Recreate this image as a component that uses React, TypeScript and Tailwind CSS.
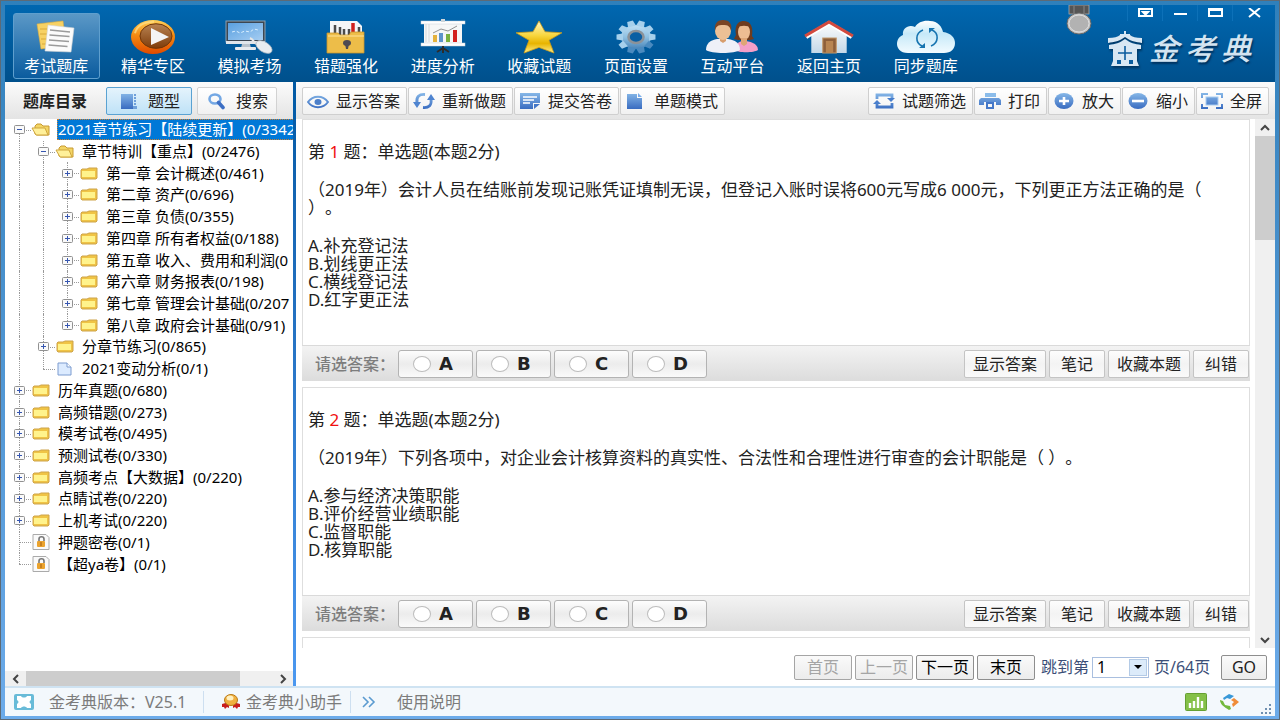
import { useState } from 'react';
import type { ReactNode } from 'react';
import clsx from 'clsx';

/* ---------- header icons ---------- */

const NotesIcon = () => (
    <svg width="40" height="34" viewBox="0 0 40 34">
        <path d="M1 4 L27 1 L30 25 L5 29 Z" fill="#f7d163" stroke="#e0b040" strokeWidth=".6" />
        <path d="M4 9h7M4 14h7M5 19h6M6 24h5" stroke="#d9a93a" />
        <path d="M12 5 L38 8 L35 32 L9 31 Z" fill="#fbfbfb" stroke="#d5d5d5" strokeWidth=".6" />
        <path d="M14 10l20 2M13.500 15l20 1.500M13 20l20 1.500M12.500 25l19 1.500" stroke="#9b9b9b" strokeWidth="1.300" />
    </svg>
);

const PlayIcon = () => (
    <svg width="46" height="36" viewBox="0 0 46 38" preserveAspectRatio="none">
        <defs>
            <linearGradient id="pl1" x1="0" y1="0" x2="0" y2="1">
                <stop offset="0" stopColor="#ffd05a" />
                <stop offset=".45" stopColor="#f58a10" />
                <stop offset="1" stopColor="#e04a00" />
            </linearGradient>
            <linearGradient id="pl2" x1="0" y1="0" x2="0" y2="1">
                <stop offset="0" stopColor="#b98352" />
                <stop offset="1" stopColor="#7e3c0a" />
            </linearGradient>
        </defs>
        <ellipse cx="23" cy="19" rx="22" ry="18" fill="url(#pl1)" />
        <ellipse cx="26" cy="18" rx="16" ry="13" fill="url(#pl2)" stroke="#6e3408" />
        <path d="M5 15C7 7 14 3 24 3" stroke="#ffe08a" strokeWidth="2" fill="none" opacity=".7" />
        <path d="M21 9.500v18L39 19Z" fill="#f4f4f4" />
    </svg>
);

const MonitorIcon = () => (
    <svg width="48" height="36" viewBox="0 0 48 36">
        <defs>
            <linearGradient id="mo1" x1="0" y1="0" x2="1" y2="1">
                <stop offset="0" stopColor="#5aa0e0" />
                <stop offset="1" stopColor="#a5cdf2" />
            </linearGradient>
        </defs>
        <rect x="1" y="2" width="39" height="21" fill="#3b4652" stroke="#8ea0b0" />
        <rect x="3" y="4" width="35" height="17" fill="url(#mo1)" />
        <path d="M7 13l4-1 4 2 5-2 5 1 4-3 4 1" stroke="#d9efff" fill="none" strokeDasharray="3 2" />
        <rect x="1" y="22" width="39" height="3" fill="#dfe5ea" />
        <path d="M17 25h8l1 4h-10Z" fill="#b8c2cb" />
        <rect x="10" y="28" width="21" height="3" rx="1" fill="#e6eaee" />
        <path d="M25 19c3 1 4 4 6 6" stroke="#e6e6e6" strokeWidth="2" fill="none" />
        <ellipse cx="39" cy="28" rx="9" ry="5" transform="rotate(32 39 28)" fill="#e9edf0" stroke="#a8b4bf" strokeWidth=".7" />
    </svg>
);

const LockFolderIcon = () => (
    <svg width="40" height="34" viewBox="0 0 40 34">
        <path d="M4 1h27l5 5v12H4Z" fill="#f5f6f7" />
        <path d="M9 5v10M14 7v8M18 9v6M23 9v6M33 7v7" stroke="#4b4b4b" strokeWidth="2.500" />
        <path d="M27 3v9" stroke="#d0201c" strokeWidth="3.500" />
        <path d="M1 13h11l2 2h9l2-3h13v21H1Z" fill="#edbd49" stroke="#c9952c" strokeWidth=".8" />
        <path d="M2 16h36" stroke="#ffe39a" />
        <ellipse cx="21" cy="23" rx="4" ry="3" fill="#4e4a52" />
        <path d="M19 24h4l-1 5h-2Z" fill="#4e4a52" />
    </svg>
);

const ChartIcon = () => (
    <svg width="46" height="36" viewBox="0 0 46 36">
        <rect x="4" y="4" width="38" height="21" fill="#f6f7f7" />
        <rect x="1" y="2" width="44" height="3" fill="#fff" stroke="#c9d3da" strokeWidth=".5" />
        <rect x="1" y="24" width="44" height="3" fill="#fff" stroke="#c9d3da" strokeWidth=".5" />
        <rect x="21" y="0" width="4" height="3" fill="#cfd6db" />
        <rect x="13" y="16" width="4" height="7" fill="#e4b23d" />
        <rect x="19" y="14" width="4" height="9" fill="#5d94cb" />
        <rect x="26" y="15" width="4" height="8" fill="#7ab13f" />
        <rect x="33" y="11" width="4" height="12" fill="#d3211f" />
        <path d="M13 14l8-4 7 2 9-5" stroke="#777" fill="none" strokeWidth=".8" />
        <path d="M6 5v18M9 5v18" stroke="#d5d9dc" />
        <path d="M23 27v7M23 29l-6 4M23 29l6 4" stroke="#2c2c2c" strokeWidth="2" />
    </svg>
);

const StarIcon = () => (
    <svg width="48" height="34" viewBox="0 0 48 36" preserveAspectRatio="none">
        <defs>
            <linearGradient id="st1" x1="0" y1="0" x2="0" y2="1">
                <stop offset="0" stopColor="#fff7c8" />
                <stop offset=".45" stopColor="#f8d63e" />
                <stop offset=".7" stopColor="#e8b400" />
                <stop offset="1" stopColor="#ffef8a" />
            </linearGradient>
        </defs>
        <path d="M24 1l6 11.500 17 1L34 21.500 39 35 24 29 9 35l5-13.500L1 13.500l17-1Z" fill="url(#st1)" stroke="#c99b1a" strokeWidth=".8" strokeLinejoin="round" />
    </svg>
);

const GearIcon = () => (
    <svg width="40" height="34" viewBox="0 0 40 34">
        <defs>
            <linearGradient id="ge1" x1="0" y1="0" x2="0" y2="34" gradientUnits="userSpaceOnUse">
                <stop offset="0" stopColor="#d3ecfb" />
                <stop offset=".5" stopColor="#8fc0e2" />
                <stop offset="1" stopColor="#2b6ba6" />
            </linearGradient>
        </defs>
        <ellipse cx="20" cy="17" rx="15" ry="12" fill="url(#ge1)" />
        {/* ten teeth, squashed like the wheel */}
        <g transform="translate(20 17) scale(1.180 1)" fill="url(#ge1)">
            {[0, 36, 72, 108, 144, 180, 216, 252, 288, 324].map((a) => (
                <path key={a} transform={`rotate(${a + 18})`} d="M-3.500 -11L-2.500 -16.500H2.500L3.500 -11Z" fill={a > 90 && a < 216 ? '#4a8abf' : '#a6d0ec'} />
            ))}
        </g>
        <ellipse cx="20" cy="17" rx="7.500" ry="6" fill="#0a5fa3" stroke="#8b9299" strokeWidth="2.600" />
    </svg>
);

const PeopleIcon = () => (
    <svg width="54" height="34" viewBox="0 0 54 34">
        <path d="M30 30c0-6 4-9 9-9s14 2 14 9c-4 3-20 3-23 0Z" fill="#f39fc8" />
        <path d="M31 15C29 3 35 1 39 1s10 3 8 15l2 3-4 1H33l-4-1Z" fill="#6f3c1e" />
        <ellipse cx="39" cy="12" rx="6" ry="8" fill="#edbd92" />
        <path d="M32 8c3-3 11-3 14 0l-2-5-5-1-5 1Z" fill="#6f3c1e" />
        <path d="M36 18h6v6l-3 2-3-2Z" fill="#dfa676" />
        <path d="M1 30c0-7 5-10 11-11h11c7 1 12 4 12 11-5 4-29 4-34 0Z" fill="#eef0f8" />
        <path d="M15 16h6v5l-3 2-3-2Z" fill="#d79d6d" />
        <ellipse cx="18" cy="11" rx="8" ry="9" fill="#ecc095" />
        <path d="M10 11C9 3 13 0 18 0s10 3 8 11c-1-5-3-6-8-6s-7 1-8 6Z" fill="#7b4524" />
    </svg>
);

const HomeIcon = () => (
    <svg width="50" height="34" viewBox="0 0 48 34" preserveAspectRatio="none">
        <defs>
            <linearGradient id="ho1" x1="0" y1="0" x2="0" y2="1">
                <stop offset="0" stopColor="#fdfdfd" />
                <stop offset="1" stopColor="#c4d8e8" />
            </linearGradient>
        </defs>
        <path d="M7 14L24 3l17 11v19H7Z" fill="url(#ho1)" />
        <rect x="18" y="18" width="13" height="15" fill="#8d5f3b" stroke="#c49a6c" />
        <rect x="21" y="21" width="7" height="12" fill="#b88552" />
        <path d="M2 17L24 3l22 14" fill="none" stroke="#fff" strokeWidth="4" />
        <path d="M1 16L24 2l23 14" fill="none" stroke="#d34a3e" strokeWidth="3" />
    </svg>
);

const CloudIcon = () => (
    <svg width="60" height="34" viewBox="0 0 60 34">
        <defs>
            <linearGradient id="cl1" x1="0" y1="0" x2="0" y2="1">
                <stop offset="0" stopColor="#fff" />
                <stop offset=".4" stopColor="#c6e9f8" />
                <stop offset="1" stopColor="#f2fbff" />
            </linearGradient>
        </defs>
        <path d="M12 33C4 33 1 28 1 24c0-5 3-8 6-9C6 8 13 4 19 7c3-5 9-7 15-6 8 0 12 6 13 11 8 1 12 6 12 11 0 6-4 10-11 10Z" fill="url(#cl1)" />
        <path d="M27 10c-8 3-8 13-1 16M35 26c8-3 8-13 1-16" stroke="#1674b0" strokeWidth="1.600" fill="none" />
        <path d="M23 28h6v-5ZM39 8h-6v5Z" fill="#1674b0" />
    </svg>
);

const MedalIcon = () => (
    <svg width="26" height="30" viewBox="0 0 26 30">
        <rect x="3" y="0" width="20" height="9" fill="#555" stroke="#aaa" strokeWidth=".8" />
        <path d="M8 1v7M18 1v7" stroke="#888" />
        <ellipse cx="13" cy="18.500" rx="12" ry="10.500" fill="#c6c6c6" stroke="#666" />
        <ellipse cx="13" cy="18.500" rx="10" ry="8.500" fill="#b2b2b2" stroke="#dedede" />
    </svg>
);

const TowerLogo = () => (
    <svg width="36" height="38" viewBox="0 0 36 38" className="drop-shadow-[1px_2px_1px_rgba(0,30,60,0.6)]">
        <g fill="#d8e7f3">
            <path d="M17 1h2v3h4v2h-10V4h4Z" />
            <path d="M1 8c6 0 10-1 12-3h10c2 2 6 3 12 3v5c-6-1-12-2-17-6C13 11 7 12 1 13Z" />
            <path d="M2 15C8 14 13 13 18 9c5 4 10 5 16 6v4H2Z" />
            <path d="M6 19h24v12l2 5H4l2-5Z" />
        </g>
        <path d="M18 16v14M11 23h14" stroke="#0a5c9e" strokeWidth="1.600" />
        <rect x="10" y="30" width="4" height="4" fill="#0a5c9e" />
        <rect x="22" y="30" width="4" height="4" fill="#0a5c9e" />
    </svg>
);

/* ---------- toolbar icons, all drawn on a 22x18 box ---------- */

const ToolDefs = () => (
    <svg width="0" height="0" className="absolute">
        <defs>
            <linearGradient id="tb" x1="0" y1="0" x2="0" y2="18" gradientUnits="userSpaceOnUse">
                <stop offset="0" stopColor="#8bbcea" />
                <stop offset="1" stopColor="#3467be" />
            </linearGradient>
        </defs>
    </svg>
);

const Tool = ({ children }: { children: ReactNode }) => (
    <svg width="22" height="18" viewBox="0 0 22 18" className="shrink-0" fill="none">
        {children}
    </svg>
);

const tools = {
    book: (
        <Tool>
            <path d="M3 2h12v15H3Z" fill="url(#tb)" />
            <path d="M16 2h2v2h-2zM16 5h2v2h-2zM16 8h2v2h-2zM16 11h2v2h-2zM15 14h4v3h-4z" fill="#6fa0da" />
        </Tool>
    ),
    search: (
        <Tool>
            <ellipse cx="9" cy="7" rx="5.500" ry="4.500" stroke="#74a8e4" strokeWidth="2.600" />
            <path d="M12.500 10.500L17 15.500" stroke="#3d6fc4" strokeWidth="3.600" strokeLinecap="round" />
        </Tool>
    ),
    eye: (
        <Tool>
            <path d="M1 10C6 3 16 3 21 10 16 17 6 17 1 10Z" stroke="url(#tb)" strokeWidth="2" />
            <ellipse cx="11" cy="10" rx="3.500" ry="3" fill="#4c7fca" />
        </Tool>
    ),
    refresh: (
        <Tool>
            <path d="M12 2.500C6 2 3 5 4 11M10 15.500c6 .5 9-2.500 8-8.500" stroke="url(#tb)" strokeWidth="2.800" />
            <path d="M0 10h8L4 16ZM22 8h-8L18 2Z" fill="#4f84d0" />
        </Tool>
    ),
    submit: (
        <Tool>
            <path d="M1 1h20v10h-7v6H1Z" fill="url(#tb)" />
            <path d="M4 5h14M4 8h11M4 11h7" stroke="#fff" strokeWidth="1.300" />
            <path d="M15 17l6-5h-6Z" fill="#4377c8" />
        </Tool>
    ),
    page: (
        <Tool>
            <path d="M2 2h10v4h5v11H2Z" fill="url(#tb)" />
            <path d="M13 1l4 4h-4Z" fill="#7badea" />
        </Tool>
    ),
    filter: (
        <Tool>
            <path d="M4 7V3h15v3M4 12v3h15v-4" stroke="url(#tb)" strokeWidth="2.800" />
            <path d="M0 12l4-4 4 4ZM14 6h8l-4 4Z" fill="#4a7fcc" />
        </Tool>
    ),
    print: (
        <Tool>
            <path d="M6 1h11v4H6Z" fill="#8bbcea" />
            <path d="M2 6h18l2 2v5h-5v-3H5v3H0V8Z" fill="url(#tb)" />
            <path d="M8 11h6v5H8Z" stroke="#4377c8" strokeWidth="2" />
        </Tool>
    ),
    plus: (
        <Tool>
            <ellipse cx="11" cy="9" rx="9.500" ry="8" fill="url(#tb)" />
            <path d="M11 5v8M6 9h10" stroke="#fff" strokeWidth="2.600" />
        </Tool>
    ),
    minus: (
        <Tool>
            <ellipse cx="11" cy="9" rx="9.500" ry="8" fill="url(#tb)" />
            <path d="M5 9h12" stroke="#fff" strokeWidth="2.600" />
        </Tool>
    ),
    full: (
        <Tool>
            <path d="M1 6V2h6M15 2h6v4M21 12v4h-6M7 16H1v-4" stroke="url(#tb)" strokeWidth="2" />
            <rect x="5" y="5" width="12" height="8" fill="url(#tb)" stroke="#a9cdf2" />
        </Tool>
    ),
};

/* ---------- data ---------- */

const navItems = [
    { label: '考试题库', icon: <NotesIcon /> },
    { label: '精华专区', icon: <PlayIcon /> },
    { label: '模拟考场', icon: <MonitorIcon /> },
    { label: '错题强化', icon: <LockFolderIcon /> },
    { label: '进度分析', icon: <ChartIcon /> },
    { label: '收藏试题', icon: <StarIcon /> },
    { label: '页面设置', icon: <GearIcon /> },
    { label: '互动平台', icon: <PeopleIcon /> },
    { label: '返回主页', icon: <HomeIcon /> },
    { label: '同步题库', icon: <CloudIcon /> },
];

type TreeIcon = 'open' | 'folder' | 'page' | 'lock';

interface TreeRow {
    depth: number;
    text: string;
    icon: TreeIcon;
    box?: '+' | '-';
    first?: boolean;
    last?: boolean;
}

const rows: TreeRow[] = [
    { depth: 0, text: '2021章节练习【陆续更新】(0/3342', icon: 'open', box: '-', first: true },
    { depth: 1, text: '章节特训【重点】(0/2476)', icon: 'open', box: '-' },
    { depth: 2, text: '第一章 会计概述(0/461)', icon: 'folder', box: '+' },
    { depth: 2, text: '第二章 资产(0/696)', icon: 'folder', box: '+' },
    { depth: 2, text: '第三章 负债(0/355)', icon: 'folder', box: '+' },
    { depth: 2, text: '第四章 所有者权益(0/188)', icon: 'folder', box: '+' },
    { depth: 2, text: '第五章 收入、费用和利润(0', icon: 'folder', box: '+' },
    { depth: 2, text: '第六章 财务报表(0/198)', icon: 'folder', box: '+' },
    { depth: 2, text: '第七章 管理会计基础(0/207', icon: 'folder', box: '+' },
    { depth: 2, text: '第八章 政府会计基础(0/91)', icon: 'folder', box: '+', last: true },
    { depth: 1, text: '分章节练习(0/865)', icon: 'folder', box: '+' },
    { depth: 1, text: '2021变动分析(0/1)', icon: 'page', last: true },
    { depth: 0, text: '历年真题(0/680)', icon: 'folder', box: '+' },
    { depth: 0, text: '高频错题(0/273)', icon: 'folder', box: '+' },
    { depth: 0, text: '模考试卷(0/495)', icon: 'folder', box: '+' },
    { depth: 0, text: '预测试卷(0/330)', icon: 'folder', box: '+' },
    { depth: 0, text: '高频考点【大数据】(0/220)', icon: 'folder', box: '+' },
    { depth: 0, text: '点睛试卷(0/220)', icon: 'folder', box: '+' },
    { depth: 0, text: '上机考试(0/220)', icon: 'folder', box: '+' },
    { depth: 0, text: '押题密卷(0/1)', icon: 'lock' },
    { depth: 0, text: '【超ya卷】(0/1)', icon: 'lock', last: true },
];

const questions = [
    {
        no: 1,
        body: (
            <>
                （2019年）会计人员在结账前发现记账凭证填制无误，但登记入账时误将600元写成6 000元，下列更正方法正确的是（
                <br />
                ）。
            </>
        ),
        options: ['A.补充登记法', 'B.划线更正法', 'C.横线登记法', 'D.红字更正法'],
    },
    {
        no: 2,
        body: <>（2019年）下列各项中，对企业会计核算资料的真实性、合法性和合理性进行审查的会计职能是（ ）。</>,
        options: ['A.参与经济决策职能', 'B.评价经营业绩职能', 'C.监督职能', 'D.核算职能'],
    },
];

/* ---------- tree ---------- */

const TreeGlyph = ({ icon }: { icon: TreeIcon }) => {
    if (icon === 'page') {
        return (
            <svg width="16" height="14" viewBox="0 0 16 14">
                <path d="M1 1h9l4 4v8H1Z" fill="#dcebff" stroke="#7c9cd0" />
                <path d="M10 1v4h4" fill="#fff" stroke="#7c9cd0" />
            </svg>
        );
    }
    if (icon === 'lock') {
        return (
            <svg width="18" height="16" viewBox="0 0 18 16">
                <path d="M1 .5h13l3 3v12H1Z" fill="#fafafa" stroke="#aaa" />
                <path d="M7 7V5c0-3 5-3 5 0v2" fill="none" stroke="#777" strokeWidth="1.600" />
                <rect x="5" y="7" width="8" height="6" rx="1" fill="#eba32e" />
                <path d="M9 8v4" stroke="#a45e10" />
            </svg>
        );
    }
    if (icon === 'open') {
        return (
            <svg width="20" height="13" viewBox="0 0 20 13">
                <path d="M4 11V3l2-2h4l2 2h6v9H6Z" fill="#f3d565" stroke="#c79a32" />
                <path d="M1 5h13l3 7H5Z" fill="#fff09a" stroke="#cfa53c" />
            </svg>
        );
    }
    return (
        <svg width="18" height="13" viewBox="0 0 18 13">
            <path d="M1 11V3l1-1h5l2-1h8v10l-1 1H2Z" fill="#f0c445" stroke="#cda34a" />
            <path d="M2 4h13v6H2Z" fill="#fff38c" />
        </svg>
    );
};

const guide = 'absolute border-dotted border-[#9a9a9a]';

function TreeLine({ row, selected, onSelect }: { row: TreeRow; selected: boolean; onSelect: () => void }) {
    return (
        <li className="flex items-center min-h-0">
            {row.depth > 0 &&
                Array.from({ length: row.depth }, (_, i) => (
                    <span key={i} className="relative w-6 h-full shrink-0">
                        <span className={clsx(guide, 'left-3 inset-y-0 border-l')} />
                    </span>
                ))}
            <span className="relative w-6 h-full shrink-0 flex items-center justify-center">
                <span className={clsx(guide, 'left-3 border-l', row.first ? 'top-1/2' : 'top-0', row.last ? 'bottom-1/2' : 'bottom-0')} />
                <span className={clsx(guide, 'left-3 right-0 top-1/2 border-t')} />
                {row.box && (
                    <svg width="11" height="9" viewBox="0 0 11 9" className="relative">
                        <rect x=".5" y=".5" width="10" height="8" rx="1" fill="#fafafa" stroke="#919191" />
                        <path d={row.box === '+' ? 'M3 4.500h5M5.500 2v5' : 'M3 4.500h5'} stroke="#3656b0" />
                    </svg>
                )}
            </span>
            <span className="w-[26px] shrink-0 flex items-center justify-center pr-[6px]">
                <TreeGlyph icon={row.icon} />
            </span>
            <button
                type="button"
                onClick={onSelect}
                className={clsx(
                    'h-[21px] pl-px text-[15px] leading-[19px] whitespace-nowrap text-left',
                    selected ? 'bg-[#0078d7] text-white outline-1 -outline-offset-1 outline-dotted outline-[#d08030]' : 'text-black',
                )}
            >
                {row.text}
            </button>
        </li>
    );
}

/* ---------- small parts ---------- */

function ToolButton({ icon, children }: { icon: ReactNode; children: ReactNode }) {
    return (
        <button
            type="button"
            className="h-[28px] flex items-center gap-[7px] pl-1 pr-[6px] rounded-[2px] border border-[#cfcfcf] bg-linear-to-b from-white to-[#f1f1f1] text-base leading-5 text-[#222] whitespace-nowrap"
        >
            {icon}
            {children}
        </button>
    );
}

const sideTab = 'h-[28px] flex items-center justify-center gap-2 rounded-[2px] border text-base leading-5 text-[#222]';

const cardButton =
    'h-[28px] rounded-[2px] border border-[#c4c4c4] bg-linear-to-b from-[#fdfdfd] via-[#f3f3f3] to-[#fafafa] text-base leading-5 text-[#222] whitespace-nowrap';

const pagerButton =
    'h-[25px] w-[58px] rounded-[2px] border border-[#8e8e8e] bg-linear-to-b from-[#fafafa] to-[#ececec] text-base leading-5 text-black whitespace-nowrap disabled:text-[#a5a5a5] disabled:border-[#a5a5a5]';

const Chevron = ({ d }: { d: string }) => (
    <svg width="10" height="10" viewBox="0 0 10 10" fill="none" stroke="#444" strokeWidth="2">
        <path d={d} />
    </svg>
);

function QuestionCard({ q }: { q: (typeof questions)[number] }) {
    return (
        <article className="mb-[6px] text-[17px] leading-[18px] text-[#222]">
            <div className="border border-b-0 border-[#dedede] pt-[23px] pb-9 pl-[5px] pr-2">
                <h2 className="mb-5">
                    第 <span className="text-[#f01010]">{q.no}</span> 题：单选题(本题2分)
                </h2>
                <p className="mb-5">{q.body}</p>
                <ul>
                    {q.options.map((o) => (
                        <li key={o}>{o}</li>
                    ))}
                </ul>
            </div>
            <div className="h-9 flex items-center justify-between pl-[13px] pr-px border-t border-[#dadada] bg-linear-to-b from-[#f3f3f3] to-[#dcdcdc]">
                <fieldset aria-label={`第${q.no}题`} className="flex items-center gap-[3px]">
                    <span className="w-20 text-base leading-5 font-medium text-[#7d7d7d]">请选答案：</span>
                    {['A', 'B', 'C', 'D'].map((c) => (
                        <label
                            key={c}
                            className="w-[75px] h-[28px] flex items-center pl-[14px] gap-2 rounded-[3px] border border-[#b3b3b3] bg-linear-to-b from-[#fdfdfd] via-[#ececec] to-[#fafafa] font-['DejaVu_Sans',sans-serif] text-[18px] font-bold text-[#222]"
                        >
                            <input type="radio" name={`q${q.no}`} className="appearance-none w-[18px] h-4 rounded-[50%] border border-[#bcbcbc] bg-white checked:border-4 checked:border-[#3b78c8]" />
                            {c}
                        </label>
                    ))}
                </fieldset>
                <div className="flex gap-[3px]">
                    <button type="button" className={clsx(cardButton, 'w-[82px]')}>显示答案</button>
                    <button type="button" className={clsx(cardButton, 'w-[56px]')}>笔记</button>
                    <button type="button" className={clsx(cardButton, 'w-[82px]')}>收藏本题</button>
                    <button type="button" className={clsx(cardButton, 'w-[56px]')}>纠错</button>
                </div>
            </div>
        </article>
    );
}

/* ---------- sections ---------- */

function Header() {
    return (
        <header className="relative flex justify-between h-[77px] shrink-0 pl-[3px] bg-linear-to-b from-[#0067b0] to-[#00508c] overflow-hidden">
            <nav className="w-[966px] shrink-0 grid grid-cols-10 justify-items-center pt-[8px]">
                {navItems.map((n, i) => (
                    <button
                        key={n.label}
                        type="button"
                        className={clsx(
                            'w-[87px] h-[66px] flex flex-col items-center rounded-[3px] border text-white',
                            i === 0 ? 'border-[#5f9fce] bg-linear-to-b from-[#5b98c6] via-[#2b77b2] via-55% to-[#0a5c9e]' : 'border-transparent',
                        )}
                    >
                        <span className="h-[42px] pt-1 flex items-center">{n.icon}</span>
                        <span className="text-base leading-5">{n.label}</span>
                    </button>
                ))}
            </nav>
            <div className="flex flex-col items-end">
                <div className="flex h-4 text-white">
                    {[
                        { name: '菜单', d: 'M1 1h13v7H1ZM5 4l2.500 2.500L10 4Z' },
                        { name: '最小化', d: 'M1 6h13' },
                        { name: '最大化', d: 'M1 1h13v7H1ZM1 2h13' },
                        { name: '关闭', d: 'M2 0l11 9M13 0L2 9' },
                    ].map((w) => (
                        <button key={w.name} type="button" title={w.name} className="w-[35px] last:w-[43px] flex items-center justify-center border-l border-[#0d71b8]">
                            <svg width="15" height="10" viewBox="0 0 15 10" fill="none" stroke="#fff" strokeWidth="2">
                                <path d={w.d} />
                            </svg>
                        </button>
                    ))}
                </div>
                <div className="flex items-center gap-[6px] pr-6 pt-2">
                    <TowerLogo />
                    <div className="flex gap-[6px] text-[30px] leading-10 font-medium italic text-[#d3e4f1] text-shadow-[1px_2px_2px_#00305c]">
                        <span>金</span>
                        <span>考</span>
                        <span>典</span>
                    </div>
                </div>
            </div>
            <span className="absolute right-[183px] top-0">
                <MedalIcon />
            </span>
        </header>
    );
}

function Sidebar() {
    const [selected, setSelected] = useState(0);
    return (
        <aside className="w-[288px] shrink-0 flex flex-col bg-white overflow-hidden">
            <div className="h-[37px] shrink-0 flex items-center pl-[18px] bg-linear-to-b from-[#fbfbfb] to-[#e4e4e4]">
                <h1 className="w-[83px] text-base leading-5 font-bold text-[#222]">题库目录</h1>
                <button type="button" className={clsx(sideTab, 'w-[86px] mr-[5px] border-[#5aa2d2] bg-linear-to-b from-[#e4f3fc] to-[#bfe2f7]')}>
                    {tools.book}
                    题型
                </button>
                <button type="button" className={clsx(sideTab, 'w-20 border-[#d2d2d2] bg-linear-to-b from-white to-[#f1f1f1]')}>
                    {tools.search}
                    搜索
                </button>
            </div>
            <ul className="h-[456px] shrink-0 grid auto-rows-fr pl-[2px]">
                {rows.map((r, i) => (
                    <TreeLine key={r.text} row={r} selected={i === selected} onSelect={() => setSelected(i)} />
                ))}
            </ul>
            <div className="mt-auto h-[15px] shrink-0 flex items-center bg-[#f0f0f0]">
                <button type="button" aria-label="左" className="w-[21px] flex justify-center">
                    <Chevron d="M7 1L3 5l4 4" />
                </button>
                <span className="w-[214px] h-full bg-[#cdcdcd]" />
                <button type="button" aria-label="右" className="ml-auto w-[21px] flex justify-center">
                    <Chevron d="M3 1l4 4-4 4" />
                </button>
            </div>
        </aside>
    );
}

function Pager() {
    return (
        <div className="h-[38px] shrink-0 flex items-center justify-end gap-[3px] pr-2 text-base leading-5 text-[#3c4f78]">
            <button type="button" disabled className={pagerButton}>首页</button>
            <button type="button" disabled className={pagerButton}>上一页</button>
            <button type="button" className={pagerButton}>下一页</button>
            <button type="button" className={pagerButton}>末页</button>
            <label htmlFor="page" className="pl-[3px]">跳到第</label>
            <span className="relative">
                <select id="page" defaultValue="1" className="block appearance-none w-[57px] h-[21px] pl-1 border border-[#a9bfdf] bg-white text-base leading-[19px] text-black">
                    <option>1</option>
                    <option>2</option>
                </select>
                <span className="absolute right-[2px] top-[2px] w-[18px] h-[17px] flex items-center justify-center border border-[#b4cbe6] bg-[#dcebfa] pointer-events-none">
                    <svg width="8" height="4" viewBox="0 0 8 4">
                        <path d="M0 0h8L4 4Z" fill="#000" />
                    </svg>
                </span>
            </span>
            <span className="w-[66px] pl-[2px] whitespace-nowrap">页/64页</span>
            <button type="button" className="w-[46px] h-[25px] rounded-[2px] border border-[#8e8e8e] bg-linear-to-b from-[#fafafa] to-[#ececec] text-base leading-5 text-[#222]">
                GO
            </button>
        </div>
    );
}

function Content() {
    return (
        <main className="flex-1 min-w-0 flex flex-col bg-white">
            <div className="h-[37px] shrink-0 flex items-center justify-between pl-[6px] pr-[6px] bg-linear-to-b from-[#fbfbfb] to-[#e4e4e4]">
                <div className="flex gap-px">
                    <ToolButton icon={tools.eye}>显示答案</ToolButton>
                    <ToolButton icon={tools.refresh}>重新做题</ToolButton>
                    <ToolButton icon={tools.submit}>提交答卷</ToolButton>
                    <ToolButton icon={tools.page}>单题模式</ToolButton>
                </div>
                <div className="flex gap-px">
                    <ToolButton icon={tools.filter}>试题筛选</ToolButton>
                    <ToolButton icon={tools.print}>打印</ToolButton>
                    <ToolButton icon={tools.plus}>放大</ToolButton>
                    <ToolButton icon={tools.minus}>缩小</ToolButton>
                    <ToolButton icon={tools.full}>全屏</ToolButton>
                </div>
            </div>
            <div className="flex-1 min-h-0 flex">
                <div className="flex-1 min-w-0 flex flex-col overflow-hidden pl-[6px] pr-[5px]">
                    {questions.map((q) => (
                        <QuestionCard key={q.no} q={q} />
                    ))}
                    <div className="flex-1 border border-b-0 border-[#dedede]" />
                </div>
                <div className="w-5 shrink-0 flex flex-col items-center bg-[#f0f0f0]">
                    <button type="button" aria-label="上" className="h-[17px]">
                        <Chevron d="M1 7l4-4 4 4" />
                    </button>
                    <span className="w-full h-[104px] bg-[#cdcdcd]" />
                    <button type="button" aria-label="下" className="mt-auto h-[17px]">
                        <Chevron d="M1 3l4 4 4-4" />
                    </button>
                </div>
            </div>
            <Pager />
        </main>
    );
}

function StatusBar() {
    return (
        <footer className="h-[30px] shrink-0 flex items-center justify-between pl-2 pr-[2px] border-t-2 border-[#cfe3f2] bg-[#f3f8fc] text-base leading-5 text-[#7b7b7b]">
            <div className="flex items-center h-full">
                <svg width="22" height="16" viewBox="0 0 22 16" className="mr-[14px]">
                    <rect x="1" y="0" width="20" height="16" rx="2" fill="#68bbd8" />
                    <path d="M4 2h4c1 2 5 2 6 0h4v4c-2 1-2 3 0 4v4h-4c-1-2-5-2-6 0H4v-4c2-1 2-3 0-4Z" fill="#fff" />
                </svg>
                <span className="w-[154px]">金考典版本：V25.1</span>
                <span className="w-px h-[22px] mr-[18px] bg-[#cddff0]" />
                <svg width="18" height="16" viewBox="0 0 18 16" className="mr-[6px]">
                    <path d="M0 10l7-2v6l-2-1-2 2-1-2H0ZM18 10l-7-2v6l2-1 2 2 1-2h2Z" fill="#c81e1e" />
                    <ellipse cx="9" cy="6" rx="6.500" ry="5.500" fill="#f0b040" stroke="#b97a16" />
                    <ellipse cx="8" cy="4" rx="3.500" ry="2.500" fill="#fff0c0" />
                </svg>
                <a href="#helper">金考典小助手</a>
                <span className="w-px h-[22px] mx-2 bg-[#cddff0]" />
                <svg width="16" height="12" viewBox="0 0 16 12" className="ml-[2px] mr-[20px]" fill="none" stroke="#5b9bd0" strokeWidth="1.600">
                    <path d="M2 1l5 5-5 5M8 1l5 5-5 5" />
                </svg>
                <a href="#help">使用说明</a>
            </div>
            <div className="flex items-center h-full">
                <svg width="22" height="18" viewBox="0 0 22 18" className="mr-3">
                    <rect x=".5" y=".5" width="21" height="17" rx="1" fill="#84c048" stroke="#65a032" />
                    <path d="M5 10v5M9 8v7M13 4v11M17 8v7" stroke="#fff" strokeWidth="2.400" />
                </svg>
                <svg width="20" height="16" viewBox="0 0 20 16">
                    <path d="M4 4l6-4 5 2-4 3-3-1-3 2Z" fill="#3898d8" />
                    <path d="M15 4l5 4-6 5-1-3 2-2-3-2Z" fill="#f08c38" />
                    <path d="M1 6l3 1 2 4 5 1 1 3-2 1C5 13 1 10 1 6Z" fill="#72b83c" />
                </svg>
                <svg width="12" height="10" viewBox="0 0 12 10" className="self-end mb-[2px] ml-[22px]" fill="#6f8fb0">
                    <path d="M8 0h2v2H8zM4 4h2v2H4zM8 4h2v2H8zM0 8h2v2H0zM4 8h2v2H4zM8 8h2v2H8z" />
                </svg>
            </div>
        </footer>
    );
}

export default function App() {
    return (
        <div className="h-screen border border-[#5d6a76] bg-linear-to-b from-[#2f80bb] to-[#6cabea] px-1 pt-[4px] pb-[3px] flex flex-col overflow-hidden font-['Noto_Sans','Noto_Sans_CJK_SC',sans-serif] [text-spacing-trim:space-all]">
            <ToolDefs />
            <Header />
            <div className="flex-1 min-h-0 flex">
                <Sidebar />
                <div className="w-[3px] shrink-0 bg-linear-to-b from-[#0059a4] to-[#4b98f0]" />
                <Content />
            </div>
            <StatusBar />
        </div>
    );
}
